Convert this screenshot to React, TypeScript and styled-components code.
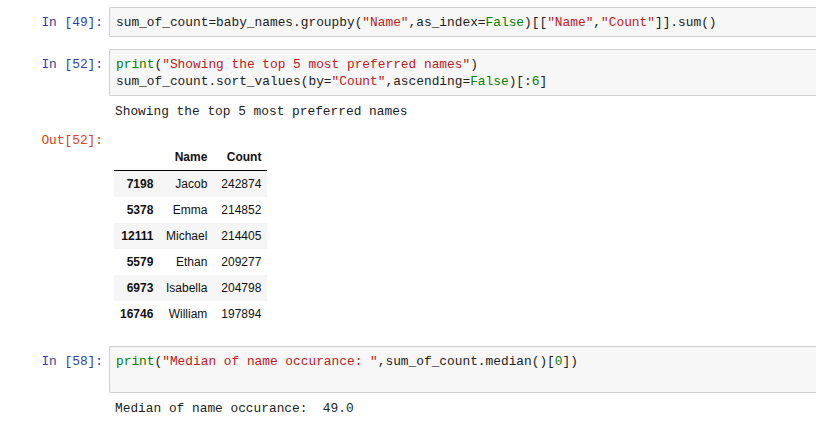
import React from "react";
import styled, { createGlobalStyle } from "styled-components";

const Global = createGlobalStyle`
  html, body { margin: 0; padding: 0; background: #ffffff; }
  body { width: 816px; height: 434px; overflow: hidden; }
`;

const Notebook = styled.div`
  display: flex;
  flex-direction: column;
  padding-top: 7px;
  font-family: "Liberation Mono", "DejaVu Sans Mono", monospace;
  font-size: 12.83px;
  line-height: 17px;
  color: #222;
`;

const Cell = styled.div<{ $gap?: number }>`
  display: flex;
  flex-direction: column;
  margin-top: ${(p) => p.$gap ?? 0}px;
`;

const Row = styled.div<{ $top?: number }>`
  display: flex;
  align-items: flex-start;
  margin-top: ${(p) => p.$top ?? 0}px;
`;

const Prompt = styled.div<{ $kind: "in" | "out" | "none"; $pad?: number }>`
  flex: 0 0 109px;
  box-sizing: border-box;
  text-align: right;
  padding-right: 6px;
  padding-top: ${(p) => p.$pad ?? 0}px;
  white-space: pre;
  color: ${(p) => (p.$kind === "out" ? "#D84315" : "#303F9F")};
`;

const InputArea = styled.div`
  flex: 1;
  background: #f7f7f7;
  border: 1px solid #cfcfcf;
  border-right: none;
  border-radius: 2px 0 0 2px;
  padding: 6px 6px 5px 6px;
`;

const CodeLine = styled.div`
  white-space: pre;
  min-height: 17px;
`;

const Str = styled.span`
  color: #ba2121;
`;

const Kw = styled.span`
  color: #008000;
`;

const Num = styled.span`
  color: #008000;
`;

const OutputText = styled.div`
  flex: 1;
  white-space: pre;
  padding-left: 6px;
`;

const OutputHtml = styled.div`
  flex: 1;
  padding-left: 5px;
`;

const DataTable = styled.table`
  margin-top: 12px;
  border-collapse: collapse;
  border-spacing: 0;
  font-family: "Liberation Sans", Arial, sans-serif;
  font-size: 12px;
  color: #111;
`;

const Col = styled.col<{ $w: number }>`
  width: ${(p) => p.$w}px;
`;

const HeadRow = styled.tr`
  border-bottom: 1px solid #000;
`;

const HeadCell = styled.th`
  text-align: right;
  font-weight: bold;
  padding: 6px;
  line-height: 14px;
  vertical-align: middle;
`;

const BodyRow = styled.tr<{ $striped: boolean }>`
  background: ${(p) => (p.$striped ? "#f5f5f5" : "transparent")};
`;

const IndexCell = styled.th`
  text-align: right;
  font-weight: bold;
  padding: 6px;
  line-height: 14px;
`;

const DataCell = styled.td`
  text-align: right;
  padding: 6px;
  line-height: 14px;
`;

const rows: [string, string, string][] = [
  ["7198", "Jacob", "242874"],
  ["5378", "Emma", "214852"],
  ["12111", "Michael", "214405"],
  ["5579", "Ethan", "209277"],
  ["6973", "Isabella", "204798"],
  ["16746", "William", "197894"],
];

export default function App() {
  return (
    <>
      <Global />
      <Notebook>
        <Cell>
          <Row>
            <Prompt $kind="in" $pad={7}>In [49]:</Prompt>
            <InputArea>
              <CodeLine>
                sum_of_count=baby_names.groupby(<Str>"Name"</Str>,as_index=<Kw>False</Kw>)[[<Str>"Name"</Str>,<Str>"Count"</Str>]].sum()
              </CodeLine>
            </InputArea>
          </Row>
        </Cell>

        <Cell $gap={12}>
          <Row>
            <Prompt $kind="in" $pad={7}>In [52]:</Prompt>
            <InputArea>
              <CodeLine>
                <Kw>print</Kw>(<Str>"Showing the top 5 most preferred names"</Str>)
              </CodeLine>
              <CodeLine>
                sum_of_count.sort_values(by=<Str>"Count"</Str>,ascending=<Kw>False</Kw>)[:<Num>6</Num>]
              </CodeLine>
            </InputArea>
          </Row>
          <Row $top={7}>
            <Prompt $kind="none" />
            <OutputText>Showing the top 5 most preferred names</OutputText>
          </Row>
          <Row $top={12}>
            <Prompt $kind="out">Out[52]:</Prompt>
            <OutputHtml>
              <DataTable>
                <colgroup>
                  <Col $w={45} />
                  <Col $w={54} />
                  <Col $w={54} />
                </colgroup>
                <thead>
                  <HeadRow>
                    <HeadCell></HeadCell>
                    <HeadCell>Name</HeadCell>
                    <HeadCell>Count</HeadCell>
                  </HeadRow>
                </thead>
                <tbody>
                  {rows.map(([idx, name, count], i) => (
                    <BodyRow key={idx} $striped={i % 2 === 0}>
                      <IndexCell>{idx}</IndexCell>
                      <DataCell>{name}</DataCell>
                      <DataCell>{count}</DataCell>
                    </BodyRow>
                  ))}
                </tbody>
              </DataTable>
            </OutputHtml>
          </Row>
        </Cell>

        <Cell $gap={19}>
          <Row>
            <Prompt $kind="in" $pad={7}>In [58]:</Prompt>
            <InputArea>
              <CodeLine>
                <Kw>print</Kw>(<Str>"Median of name occurance: "</Str>,sum_of_count.median()[<Num>0</Num>])
              </CodeLine>
              <CodeLine>{" "}</CodeLine>
            </InputArea>
          </Row>
          <Row $top={7}>
            <Prompt $kind="none" />
            <OutputText>Median of name occurance:  49.0</OutputText>
          </Row>
        </Cell>
      </Notebook>
    </>
  );
}
